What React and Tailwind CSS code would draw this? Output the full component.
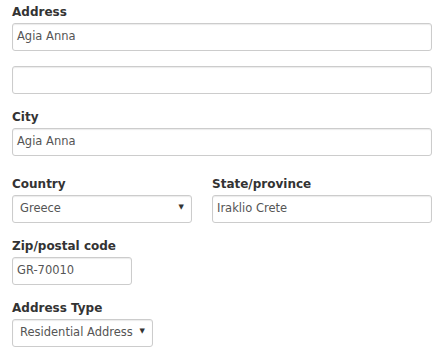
import React from "react";

const Label = ({ children }) => (
  <div className="text-[12px] font-bold text-[#333] leading-[15px] mb-[3px]">{children}</div>
);

const Field = ({ value, className = "" }) => (
  <div
    className={`h-[28px] border border-[#ccc] rounded-[3px] bg-white shadow-[inset_0_1px_1px_rgba(0,0,0,0.08)] px-[4px] flex items-center text-[11.5px] text-[#555] ${className}`}
  >
    {value}
  </div>
);

const Select = ({ value, className = "" }) => (
  <div
    className={`h-[28px] border border-[#ccc] rounded-[3px] bg-white shadow-[inset_0_1px_1px_rgba(0,0,0,0.08)] pl-[7px] pr-[7px] flex items-center justify-between text-[11.5px] text-[#555] ${className}`}
  >
    <span>{value}</span>
    <span className="text-[7px] text-[#333] -mt-[4px]">▼</span>
  </div>
);

export default function App() {
  return (
    <div
      className="w-[444px] h-[362px] bg-white px-[12px] pt-[5px]"
      style={{ fontFamily: '"DejaVu Sans", Verdana, sans-serif' }}
    >
      <Label>Address</Label>
      <Field value="Agia Anna" className="w-[420px]" />
      <Field value="" className="w-[420px] mt-[15px]" />

      <div className="mt-[16px]">
        <Label>City</Label>
        <Field value="Agia Anna" className="w-[420px]" />
      </div>

      <div className="mt-[21px] flex gap-[20px]">
        <div className="w-[180px]">
          <Label>Country</Label>
          <Select value="Greece" className="w-[180px]" />
        </div>
        <div className="w-[220px]">
          <Label>State/province</Label>
          <Field value="Iraklio Crete" className="w-[220px]" />
        </div>
      </div>

      <div className="mt-[16px]">
        <Label>Zip/postal code</Label>
        <Field value="GR-70010" className="w-[120px] h-[27px]" />
      </div>

      <div className="mt-[16px]">
        <Label>Address Type</Label>
        <Select value="Residential Address" className="w-[141px] h-[27px]" />
      </div>
    </div>
  );
}
